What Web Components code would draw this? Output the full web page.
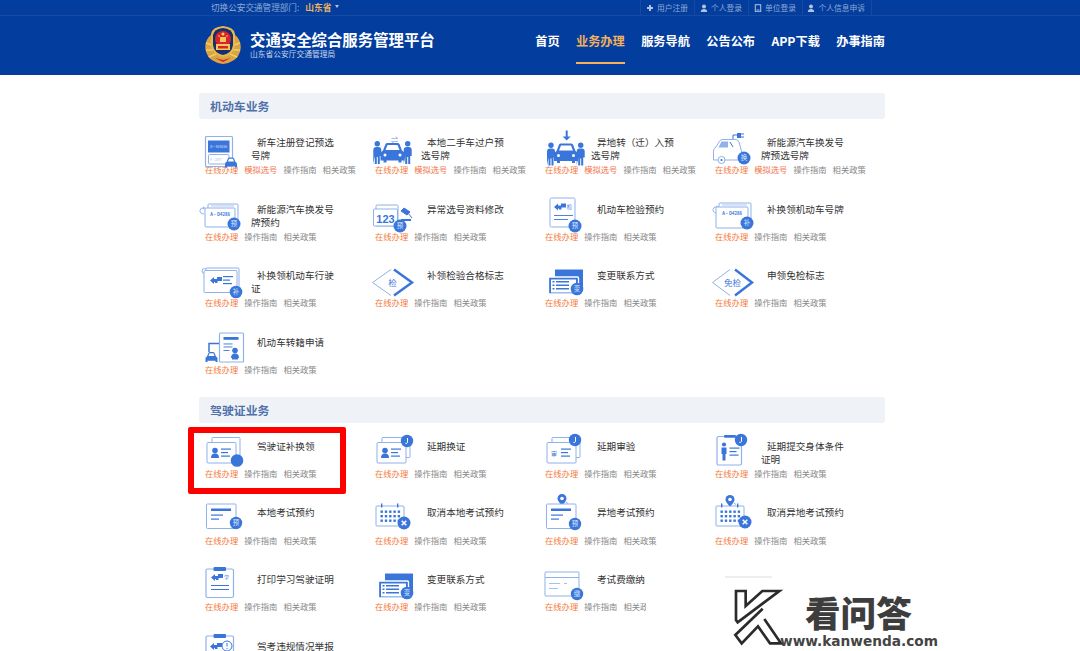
<!DOCTYPE html>
<html lang="zh"><head><meta charset="utf-8"><title>交通安全综合服务管理平台</title>
<style>
html,body{margin:0;height:651px;overflow:hidden;background:#fff;font-family:"Noto Sans CJK SC","Liberation Sans",sans-serif}
body{position:relative}
</style></head><body>
<site-header></site-header>
<main-area>
<svc-section heading="机动车业务">
<svc-item icon="newcar" sim>新车注册登记预选号牌</svc-item>
<svc-item icon="swap" sim>本地二手车过户预选号牌</svc-item>
<svc-item icon="transfer" sim>异地转（迁）入预选号牌</svc-item>
<svc-item icon="ev" sim>新能源汽车换发号牌预选号牌</svc-item>
<svc-item icon="evplate">新能源汽车换发号牌预约</svc-item>
<svc-item icon="n123">异常选号资料修改</svc-item>
<svc-item icon="inspect">机动车检验预约</svc-item>
<svc-item icon="plate">补换领机动车号牌</svc-item>
<svc-item icon="license">补换领机动车行驶证</svc-item>
<svc-item icon="mark">补领检验合格标志</svc-item>
<svc-item icon="contact">变更联系方式</svc-item>
<svc-item icon="exempt">申领免检标志</svc-item>
<svc-item icon="move">机动车转籍申请</svc-item>
</svc-section>
<svc-section heading="驾驶证业务">
<svc-item icon="dl">驾驶证补换领</svc-item>
<svc-item icon="dlj">延期换证</svc-item>
<svc-item icon="audit">延期审验</svc-item>
<svc-item icon="body">延期提交身体条件证明</svc-item>
<svc-item icon="exam">本地考试预约</svc-item>
<svc-item icon="cancel">取消本地考试预约</svc-item>
<svc-item icon="examp">异地考试预约</svc-item>
<svc-item icon="cancelp">取消异地考试预约</svc-item>
<svc-item icon="study">打印学习驾驶证明</svc-item>
<svc-item icon="contact2">变更联系方式</svc-item>
<svc-item icon="fee">考试费缴纳</svc-item>
<svc-item></svc-item>
<svc-item icon="report" nolinks>驾考违规情况举报</svc-item>
</svc-section>
</main-area>
<red-mark></red-mark>
<water-mark></water-mark>
<script>
const L='#8fb1ec',B='#3a76da';
const badge=(x,y,t='',r=6.5)=>`<circle cx="${x}" cy="${y}" r="${r}" fill="${B}"/>`+(t?`<text x="${x}" y="${y+2.3}" font-size="6.5" fill="#dbe7fb" text-anchor="middle">${t}</text>`:'');
const clockB=(x,y)=>badge(x,y,'',6.2)+`<path d="M${x+.5} ${y-3}v4.5q-.3 1.3-2.2.8" fill="none" stroke="#fff" stroke-width="1"/>`;
const xB=(x,y)=>badge(x,y,'',6.5)+`<path d="M${x-2.3} ${y-2.3}l4.6 4.6m0-4.6l-4.6 4.6" stroke="#fff" stroke-width="1.5"/>`;
const rect=(x,y,w,h,s=L,sw=1,r=1)=>`<rect x="${x}" y="${y}" width="${w}" height="${h}" rx="${r}" fill="#fff" stroke="${s}" stroke-width="${sw}"/>`;
const bar=(x,y,w,h=1.2,c=B)=>`<rect x="${x}" y="${y}" width="${w}" height="${h}" fill="${c}"/>`;
const tx=(x,y,t,fs=7,c=B,w=400)=>`<text x="${x}" y="${y}" font-size="${fs}" fill="${c}" font-weight="${w}" text-anchor="middle">${t}</text>`;
const car=(x,y)=>`<g transform="translate(${x} ${y})"><path d="M2 5L3.5 1.2Q4 .5 5 .5H8Q9 .5 9.500 1.200L11 5Q12.500 5.500 12.500 7V10.500H10.500V9.300H2.500V10.500H.5V7Q.5 5.500 2 5Z" fill="${B}"/><path d="M3.500 4.500L4.500 1.800H8.500L9.500 4.500Z" fill="#fff"/></g>`;
const person=(x,y)=>`<g transform="translate(${x} ${y})" fill="${B}"><circle cx="4" cy="2.700" r="2.700"/><path d="M0 23V9Q0 6 3 6H5Q8 6 8 9V15H6.500V23H4.500V16H3.500V23H1.500V15Z"/></g>`;
const bigCar=(x,y)=>`<g transform="translate(${x} ${y})"><path d="M3 8L5.500 1.500Q6 .5 7.500 .5H17.500Q19 .5 19.500 1.500L22 8Q24.500 9 24.500 11.500V18H21.500V20H18.500V18H6.500V20H3.500V18H.5V11.500Q.5 9 3 8Z" fill="${B}"/><path d="M5.500 7.500L7.500 2.500H17.500L19.500 7.500Z" fill="#fff"/><circle cx="5" cy="12.500" r="1.500" fill="#fff"/><circle cx="20" cy="12.500" r="1.500" fill="#fff"/></g>`;
const arrowSym=(x,y)=>`<path transform="translate(${x} ${y})" d="M0 3.500L4 0V2H7V0H12V4H7.500V6H5V5H4V7Z" fill="${B}"/>`;
const plateBack=(x,y,w,h,t)=>rect(x+3,y,w-3,h-3)+bar(x+6,y+1.600,w-10,.7,L)+rect(x,y+4,w-3,h-4)+tx(x+(w-3)/2,y+12,t,4.200,B,700);
const curl=(x,y)=>`<path d="M${x+4} ${y+7}q-4.500-.5-4-3.500t3.500-2.500" fill="none" stroke="${L}" stroke-width="1"/><path d="M${x+3} ${y-.5}l2.500 1.500-2.500 1.500z" fill="${L}"/>`;
const cards=(inner)=>rect(7,-2.500,28,20)+rect(2,2.500,29,20.500)+inner;
const dude=(x,y)=>`<g transform="translate(${x} ${y})" fill="${B}"><circle cx="4" cy="2.500" r="2.800"/><path d="M0 10Q0 6 3 5.500H5Q8 6 8 10Z"/></g>`;
const lines3=(x,y)=>bar(x,y,10)+bar(x,y+3.500,7)+bar(x,y+7,9);
const calendar=()=>{let d='';for(let r=0;r<3;r++)for(let c=0;c<5;c++)d+=`<rect x="${5.500+c*4.300}" y="${4.500+r*4.500}" width="2.400" height="2.400" fill="${B}"/>`;return rect(1,0,28,20)+bar(6,-2.500,1.400,4)+bar(22,-2.500,1.400,4)+d};
const pin=(x,y)=>`<path d="M${x} ${y+5.500}q-4.500-4.500-4.500-7a4.500 4.500 0 0 1 9 0q0 2.500-4.500 7z" fill="${B}"/><circle cx="${x}" cy="${y-1.500}" r="1.800" fill="#fff"/><path d="M${x+4} ${y+2}l2 1.500" stroke="${L}"/>`;
const examCard=()=>rect(1.500,-2,29.500,24.500)+bar(6,2.500,20,2.500)+bar(6,8.500,12)+bar(6,12.500,8);
const clip=(inner)=>rect(1,-4,27.500,28.500,L,1.200,1.500)+`<rect x="8.500" y="-6" width="12.500" height="4" rx="1" fill="${B}"/>`+inner;
const contact=()=>`<path d="M10 .5H38V20H10Z" fill="${B}"/>`+`<rect x="3.500" y="8" width="30" height="17" rx="1" fill="${B}" stroke="#fff" stroke-width="1.300"/><rect x="6" y="10.500" width="25" height="13" fill="#fff"/>`+[12,15.500,19].map(y=>bar(7.500,y,2,1.500)+bar(11,y,13,1.500)).join('')+badge(32,20,'变',6.300);
const ICONS={
newcar:rect(.5,.5,27,30,L,1.200)+`<rect x="3" y="4.500" width="21.500" height="12" fill="${B}"/><text x="13.700" y="11.800" font-size="3.300" fill="#cfe0fb" text-anchor="middle">B·92B266</text>`+rect(3.500,18.500,20.500,9.500)+tx(11,24.800,'F·2877',3,L)+car(19.500,21),
swap:`<path d="M16.500 2.500H23M20.500 .8L23 2.500M23 5.500H16.500M19 7.200L16.500 5.500" fill="none" stroke="${L}" stroke-width=".8"/>`+bigCar(5,6.500)+person(-1.700,5)+person(28.700,5),
transfer:`<path d="M21.700 -5.500V1" stroke="${B}" stroke-width="2"/><path d="M17.700 .5H25.700L21.700 4.500Z" fill="${B}"/>`+bigCar(8.500,7)+person(2,6.500)+person(31.700,6.500),
ev:`<path d="M-1.500 23V15Q-1.500 12 1 11L5 4.500Q6 3.500 8 3.500H20Q23 3.500 24 6L27 17V24H-1.500Z" fill="#fff" stroke="${L}" stroke-width="1"/><path d="M6.500 5.500H13V11.500H3.500Z" fill="${L}"/><path d="M15 6L18 11" stroke="${B}"/><circle cx="6.500" cy="24" r="3.500" fill="#fff" stroke="${L}"/><circle cx="6.500" cy="24" r="1.100" fill="${B}"/><path d="M18 3V-1H22" fill="none" stroke="${B}"/><rect x="22" y="-3" width="4" height="5" fill="${B}"/><path d="M26 -2h3M26 1h3" stroke="${B}"/>`+badge(29,22,'换'),
evplate:curl(-5,4)+plateBack(0,1,33,23,'A·D4286')+badge(29,21,'预'),
n123:rect(1,2,22,21,L)+rect(-1.500,6,24,17,L)+`<text x="10.500" y="19.500" font-size="11" font-weight="700" fill="${B}" text-anchor="middle" font-family="Liberation Sans">123</text><path d="M29 5l6 4-3 3-6-4zM33 10l4 5" stroke="${B}" stroke-width="1" fill="${B}"/><rect x="26" y="16" width="10" height="2" fill="${B}"/>`+badge(25,23,'预'),
inspect:rect(5,-5,25,29,L,1,1.500)+arrowSym(9,.5)+tx(24.500,5.500,'检',5.500)+bar(9,12,19,.9)+bar(9,16,14,.9)+badge(30,23,'预'),
plate:curl(-2,3)+plateBack(1,0,35,25,'A·D4286')+badge(32,20,'补'),
license:`<circle cx="-.5" cy="2" r="2.500" fill="#fff" stroke="${L}"/>`+rect(1,-1,33,22)+rect(-1,1.500,33,22)+arrowSym(5,8)+lines3(18,7)+badge(31,23,'补',6.300),
mark:`<path d="M16 .5L-2.500 13.500L16 26.500" fill="none" stroke="${L}" stroke-width="1"/><path d="M19 .5L37 13.500L19 26.500" fill="none" stroke="${B}" stroke-width="2.500"/>`+tx(17.500,16.800,'检',8.500),
contact:contact(),
exempt:`<path d="M15 .5L-2.500 13.500L15 26.500" fill="none" stroke="${L}" stroke-width="1"/><path d="M20 .5L37 13.500L20 26.500" fill="none" stroke="${B}" stroke-width="2.500"/>`+tx(17.500,16.800,'免检',8.500),
move:rect(14.500,-3,24,29,L,1.200)+bar(18.500,1,15,2.800)+bar(18.500,7.500,9,.9)+bar(18.500,10.500,9,.9)+bar(18.500,14,6,.9)+dude(26,12)+bar(27,21,6,2.500)+`<path d="M4 16V7.500H14" fill="none" stroke="${B}" stroke-width="1.500"/>`+car(0,15.500),
dl:cards(dude(6,8)+lines3(16,8.500))+badge(32,20.500,'',6.300),
dlj:cards(dude(6,8)+lines3(16,8.500))+clockB(32,1),
audit:cards(tx(9,16,'审',6)+lines3(16,8.500))+clockB(30,0),
body:rect(2,-3.500,24.500,28.500,L,1.200,1.500)+`<rect x="9" y="-5" width="12" height="2.800" rx="1" fill="${B}"/>`+`<circle cx="9" cy="4.500" r="2.100" fill="${B}"/><path d="M6.500 7.500H11.500V14H10.500V20.500H7.500V14H6.500Z" fill="${B}"/>`+lines3(14.500,7.500)+clockB(26,0),
exam:examCard()+badge(31,17,'预',6.200),
cancel:calendar()+xB(29,17),
examp:pin(17,-6)+examCard()+badge(30,18,'预',6.200),
cancelp:calendar()+pin(15,-5)+xB(30,16),
study:clip(arrowSym(6,1)+tx(21.500,5.500,'学',5)+bar(6,12,18,1)+bar(6,16,18,1)),
contact2:contact(),
fee:rect(0,-1,34,24,L,1,.5)+bar(0,4,34,1,L)+bar(4,10,11,.8,L)+bar(19,10,3,.8,L)+bar(4,15,9,.8,L)+badge(32,21,'缴',6.200),
report:clip(arrowSym(5,3)+`<circle cx="22" cy="6" r="5" fill="#fff" stroke="${B}"/><path d="M22 3V6.500M22 8V9" stroke="${B}"/>`)
};
class SiteHeader extends HTMLElement{constructor(){super();this.attachShadow({mode:'open'}).innerHTML=`<style>
:host{display:block;height:75px;background:#033d9d;color:#fff}
.top{height:15px;border-bottom:1px solid #16499f;margin:0;display:flex;justify-content:space-between;padding:0 195px 0 199px}
.sw{padding-left:12px;font-size:8.600px;line-height:15px;color:#8fa9d4;display:flex}
.sw b{color:#eeb15f;font-weight:700;margin-left:6px;font-size:8.700px}
.sw i{width:0;height:0;border:2.500px solid transparent;border-top:3px solid #b9c9e5;border-bottom:0;margin:5px 0 0 4px}
.links{display:flex;margin-right:13px}
.main{height:59px;padding:0 195px 0 199px;display:flex;justify-content:space-between}
.brand{display:flex;padding:9px 0 0 5px}
.brand svg{width:38px;height:40px;display:block}
.tt{margin:4px 0 0 8px}
.tt h1{margin:0;font-size:15.400px;line-height:20px;font-weight:700}
.tt p{margin:0;font-size:7.750px;line-height:10px;color:#c9d6ec}
nav{display:flex;gap:16.400px}
</style>
<div class="top"><div class="sw">切换公安交通管理部门:<b>山东省</b><i></i></div><div class="links">
<top-link kind="plus">用户注册</top-link><top-link kind="user">个人登录</top-link><top-link kind="unit">单位登录</top-link><top-link kind="user" last>个人信息申诉</top-link></div></div>
<div class="main"><div class="brand"><svg viewBox="0 0 38 40"><path d="M8 9Q-1 16 2 27Q5 37 19 39Q33 37 36 27Q39 16 30 9Q33 20 27 28H11Q5 20 8 9Z" fill="#d9a441"/><path d="M2 18l6 2M2 25l7 0M5 32l7-3M36 18l-6 2M36 25l-7 0M33 32l-7-3" stroke="#f0cd6d" stroke-width="1.500"/><path d="M19 1Q30 2 31 9V21Q30 30 19 32Q8 30 7 21V9Q8 2 19 1Z" fill="#e7b84e"/><path d="M19 3Q28 4 29 10V20Q28 28 19 30Q10 28 9 20V10Q10 4 19 3Z" fill="#12306f"/><circle cx="19" cy="14" r="8" fill="#d8232a"/><path d="M12 19H26V25H12Z" fill="#f1c75a"/><path d="M14 21H24V23.500H14Z" fill="#d8232a"/><path d="M16 12h6v5h-6z" fill="#f1c75a"/><circle cx="19" cy="9" r="1.500" fill="#f6d765"/><circle cx="15" cy="11" r=".8" fill="#f6d765"/><circle cx="23" cy="11" r=".8" fill="#f6d765"/><path d="M11 33l8 4 8-4-8 2z" fill="#d8232a"/></svg>
<div class="tt"><h1>交通安全综合服务管理平台</h1><p>山东省公安厅交通管理局</p></div></div>
<nav><nav-item>首页</nav-item><nav-item active>业务办理</nav-item><nav-item>服务导航</nav-item><nav-item>公告公布</nav-item><nav-item>APP下载</nav-item><nav-item>办事指南</nav-item></nav></div>`}}
class TopLink extends HTMLElement{constructor(){super();const k=this.getAttribute('kind');const g={plus:'<path d="M4 1V7M1 4H7" stroke="currentColor" stroke-width="2"/>',user:'<circle cx="4" cy="2.500" r="2" fill="currentColor"/><path d="M.8 8Q.8 5 4 5T7.200 8Z" fill="currentColor"/>',unit:'<rect x="1.300" y=".7" width="5.400" height="7" fill="none" stroke="currentColor"/><path d="M2.500 6H5.500" stroke="currentColor"/>'}[k];
this.attachShadow({mode:'open'}).innerHTML=`<style>:host{display:flex;align-items:center;justify-content:flex-end;gap:3px;box-sizing:border-box;width:54px;height:15px;padding-right:6px;border-left:1px solid #16499f;font-size:7.750px;color:#8fa9d4}:host([last]){width:70px;border-right:1px solid #16499f}svg{width:8px;height:8px;color:#b3c4e2}</style><svg viewBox="0 0 8 8">${g}</svg><slot></slot>`}}
class NavItem extends HTMLElement{constructor(){super();this.attachShadow({mode:'open'}).innerHTML=`<style>:host{display:block;box-sizing:border-box;height:47.500px;padding-top:16px;font-size:12.200px;line-height:18px;font-weight:700;color:#fff}:host([active]){color:#f2b05c;border-bottom:2px solid #f5b45c}</style><slot></slot>`}}
class MainArea extends HTMLElement{constructor(){super();this.attachShadow({mode:'open'}).innerHTML=`<style>:host{display:block;width:686px;margin-left:199px;padding-top:18.300px}</style><slot></slot>`}}
class SvcSection extends HTMLElement{constructor(){super();this.attachShadow({mode:'open'}).innerHTML=`<style>:host{display:block;margin-bottom:21.400px}
h2{margin:0;height:25.400px;line-height:25.400px;background:#eff3f8;border-radius:3px;padding-left:11px;font-size:11.900px;font-weight:700;color:#4f72a8}
.g{display:grid;grid-template-columns:repeat(4,170px);grid-auto-rows:40px;row-gap:26.670px;padding:17.200px 0 0 6px}</style><h2></h2><div class="g"><slot></slot></div>`;this.shadowRoot.querySelector('h2').textContent=this.getAttribute('heading')}}
class SvcIcon extends HTMLElement{constructor(){super();this.attachShadow({mode:'open'}).innerHTML=`<style>:host{display:block;flex:0 0 46px;height:27px;position:relative;z-index:1}svg{display:block;width:46px;height:38px;overflow:visible;font-family:"Noto Sans CJK SC",sans-serif}</style><svg viewBox="0 0 46 38">${ICONS[this.getAttribute('name')]||''}</svg>`}}
class SvcItem extends HTMLElement{constructor(){super();const ic=this.getAttribute('icon');
if(!ic){this.attachShadow({mode:'open'}).innerHTML='';return}
const sim=this.hasAttribute('sim');const links=this.hasAttribute('nolinks')?'':`<div class="l"><span class="o">在线办理</span>${sim?'<span class="s">模拟选号</span>':''}<span>操作指南</span><span>相关政策</span></div>`;
this.attachShadow({mode:'open'}).innerHTML=`<style>:host{display:block;height:40px;width:170px}
.t{display:flex;height:27.200px}.n{width:88px;font-size:9.600px;line-height:13px;color:#333;text-indent:6px}
.l{display:flex;gap:6px;font-size:8.300px;line-height:12px;color:#888}.o{color:#f47a3d}.s{color:#f0744a}</style>
<div class="t"><svc-icon name="${ic}"></svc-icon><div class="n"><slot></slot></div></div>${links}`}}
class RedMark extends HTMLElement{constructor(){super();this.attachShadow({mode:'open'}).innerHTML=`<style>:host{position:absolute;left:188px;top:427px;width:158px;height:67px;box-sizing:border-box;border:6px solid #f00;border-radius:2px}</style>`}}
class WaterMark extends HTMLElement{constructor(){super();this.attachShadow({mode:'open'}).innerHTML=`<style>:host{position:absolute;left:646px;top:575px;width:434px;height:76px;background:#fff}
svg{position:absolute;left:79px;top:5px;width:70px;height:71px}
.a{position:absolute;left:159px;top:19px;font-size:35.600px;line-height:36px;font-weight:900;color:#3d3d3d;white-space:nowrap}
.b{position:absolute;left:134px;top:58px;font:700 13.700px/16px "DejaVu Sans",sans-serif;color:#444;white-space:nowrap}
.c{position:absolute;left:79px;top:1px;width:47px;height:1.500px;background:#eee}</style>
<div class="c"></div>
<svg viewBox="0 0 210 213"><path d="M33 33H62V78L112 33H163L38 127L33 120Z" fill="#fff" stroke="#2b2b2b" stroke-width="8"/><path d="M113 86L31 165L50 190L99 139L135 190H168L118 117" fill="#fff" stroke="#2b2b2b" stroke-width="8"/></svg>
<div class="a">看问答</div><div class="b">www.kanwenda.com</div>`}}
[['top-link',TopLink],['nav-item',NavItem],['site-header',SiteHeader],['main-area',MainArea],['svc-section',SvcSection],['svc-icon',SvcIcon],['svc-item',SvcItem],['red-mark',RedMark],['water-mark',WaterMark]].forEach(([n,c])=>customElements.define(n,c));
</script>
</body></html>
